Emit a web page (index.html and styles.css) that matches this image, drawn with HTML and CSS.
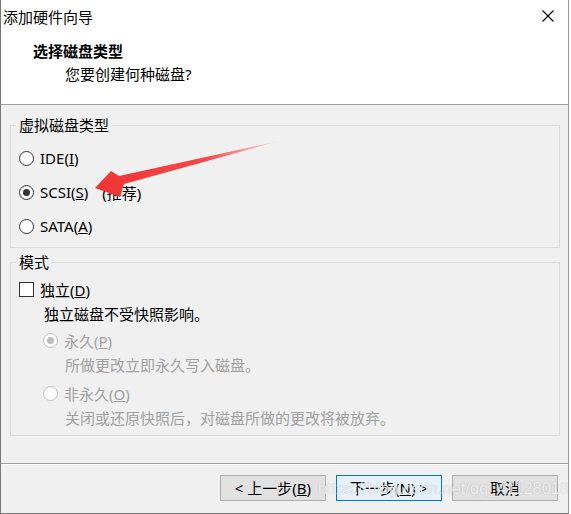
FILE: index.html
```html
<!DOCTYPE html>
<html lang="zh-CN">
<head>
  <meta charset="UTF-8">
  <title>添加硬件向导</title>
  <link rel="stylesheet" href="styles.css">
</head>
<body>

<div class="dialog">
  <div class="header">
    <div class="titlebar">
      <span class="title">添加硬件向导</span>
      <span class="close">
        <svg width="12" height="12" viewBox="0 0 12 12"><path d="M0.5 0.5 L11.5 11.5 M11.5 0.5 L0.5 11.5" stroke="#000" stroke-width="1.1" fill="none"/></svg>
      </span>
    </div>
    <div class="heading">选择磁盘类型</div>
    <div class="subheading">您要创建何种磁盘?</div>
  </div>

  <div class="content">
    <fieldset class="group type-group">
      <legend>虚拟磁盘类型</legend>
      <div class="option"><span class="radio"></span><span class="label">IDE(<u>I</u>)</span></div>
      <div class="option"><span class="radio checked"></span><span class="label">SCSI(<u>S</u>)</span><span class="hint">(推荐)</span></div>
      <div class="option"><span class="radio"></span><span class="label">SATA(<u>A</u>)</span></div>
    </fieldset>

    <fieldset class="group mode-group">
      <legend>模式</legend>
      <div class="row"><span class="checkbox"></span><span class="label">独立(<u>D</u>)</span></div>
      <div class="row desc">独立磁盘不受快照影响。</div>
      <div class="row sub disabled first"><span class="radio checked"></span><span class="label">永久(<u>P</u>)</span></div>
      <div class="row sub-desc disabled">所做更改立即永久写入磁盘。</div>
      <div class="row sub disabled second"><span class="radio"></span><span class="label">非永久(<u>O</u>)</span></div>
      <div class="row sub-desc disabled">关闭或还原快照后，对磁盘所做的更改将被放弃。</div>
    </fieldset>
  </div>

  <div class="footer">
    <button class="btn">&lt; 上一步(<u>B</u>)</button>
    <button class="btn primary">下一步(<u>N</u>) &gt;</button>
    <button class="btn">取消</button>
  </div>

  <svg class="arrow" width="571" height="514" viewBox="0 0 571 514">
    <defs>
      <linearGradient id="fade" x1="97" y1="186" x2="279" y2="141" gradientUnits="userSpaceOnUse">
        <stop offset="0" stop-color="#f03434"/>
        <stop offset="0.6" stop-color="#f34848"/>
        <stop offset="1" stop-color="#ffdede"/>
      </linearGradient>
    </defs>
    <polygon points="95,188 111,171 119,176 279,141 124,184 120,197" fill="url(#fade)"/>
  </svg>

  <div class="watermark">https://blog.csdn.net/qq_41128018</div>
</div>

</body>
</html>
```

FILE: styles.css
```css
body {
  margin: 0;
  background: #ffffff;
  font-family: 'Noto Sans', 'Noto Sans CJK SC', sans-serif;
  font-size: 15px;
  color: #000;
}

.dialog {
  position: relative;
  width: 567px;
  height: 513px;
  background: #f0f0f0;
  border-left: 1px solid #777;
  border-right: 1px solid #999;
  border-bottom: 1px solid #777;
  overflow: hidden;
}

.header {
  background: #fff;
  height: 104px;
  border-bottom: 1px solid #a0a0a0;
}

.titlebar {
  height: 34px;
  display: flex;
  justify-content: space-between;
  align-items: center;
}

.title {
  padding-left: 2px;
  line-height: 34px;
}

.close {
  display: flex;
  margin-right: 14px;
  margin-top: -2px;
}

.heading {
  font-weight: bold;
  line-height: 20px;
  margin-top: 7px;
  padding-left: 32px;
}

.subheading {
  line-height: 20px;
  margin-top: 3px;
  padding-left: 64px;
}

.content {
  padding-top: 10px;
}

.group {
  margin: 0 8px 0 9px;
  padding: 0 0 0 8px;
  border: 1px solid #dcdcdc;
  min-width: 0;
}

.group legend {
  margin-left: -3px;
  padding: 0 3px;
  line-height: 20px;
}

.type-group {
  padding-top: 6px;
  padding-bottom: 4px;
}

.mode-group {
  margin-top: 4px;
  padding-top: 5px;
  padding-bottom: 6px;
}

.option {
  height: 34px;
  display: flex;
  align-items: center;
}

.row {
  height: 24px;
  display: flex;
  align-items: center;
}

.radio {
  width: 13px;
  height: 13px;
  border: 1px solid #333;
  border-radius: 50%;
  background: #fff;
  position: relative;
  flex: none;
}

.radio.checked::after {
  content: "";
  position: absolute;
  left: 3px;
  top: 3px;
  width: 7px;
  height: 7px;
  border-radius: 50%;
  background: #333;
}

.checkbox {
  width: 13px;
  height: 13px;
  border: 1px solid #333;
  background: #fff;
  flex: none;
}

.label {
  margin-left: 6px;
}

.hint {
  margin-left: 14px;
}

.desc {
  padding-left: 25px;
}

.sub {
  padding-left: 24px;
}

.sub.first {
  margin-top: 3px;
}

.sub.second {
  margin-top: 5px;
}

.sub-desc {
  padding-left: 46px;
}

.disabled {
  color: #a0a0a0;
}

.disabled .radio {
  border-color: #bcbcbc;
  background: #fff;
}

.disabled .radio.checked::after {
  background: #bcbcbc;
}

.footer {
  margin-top: 27px;
  border-top: 1px solid #a0a0a0;
  box-shadow: inset 0 1px 0 #fff;
  padding: 11px 10px 0 0;
  display: flex;
  justify-content: flex-end;
  gap: 10px;
}

.btn {
  width: 106px;
  height: 26px;
  padding: 0;
  font-family: 'Noto Sans', 'Noto Sans CJK SC', sans-serif;
  font-size: 15px;
  color: #000;
  background: #e1e1e1;
  border: 1px solid #adadad;
  border-radius: 0;
  line-height: 22px;
}

.btn.primary {
  background: #e5f1fb;
  border-color: #0078d7;
}

.arrow {
  position: absolute;
  left: -1px;
  top: 0;
  pointer-events: none;
}

.watermark {
  position: absolute;
  left: 317px;
  top: 480px;
  font-family: 'Liberation Sans', Arial, sans-serif;
  font-size: 16px;
  color: rgba(255, 255, 255, 0.75);
  text-shadow: 0 0 1px rgba(120, 120, 120, 0.5);
  letter-spacing: 0.2px;
  pointer-events: none;
}
```
